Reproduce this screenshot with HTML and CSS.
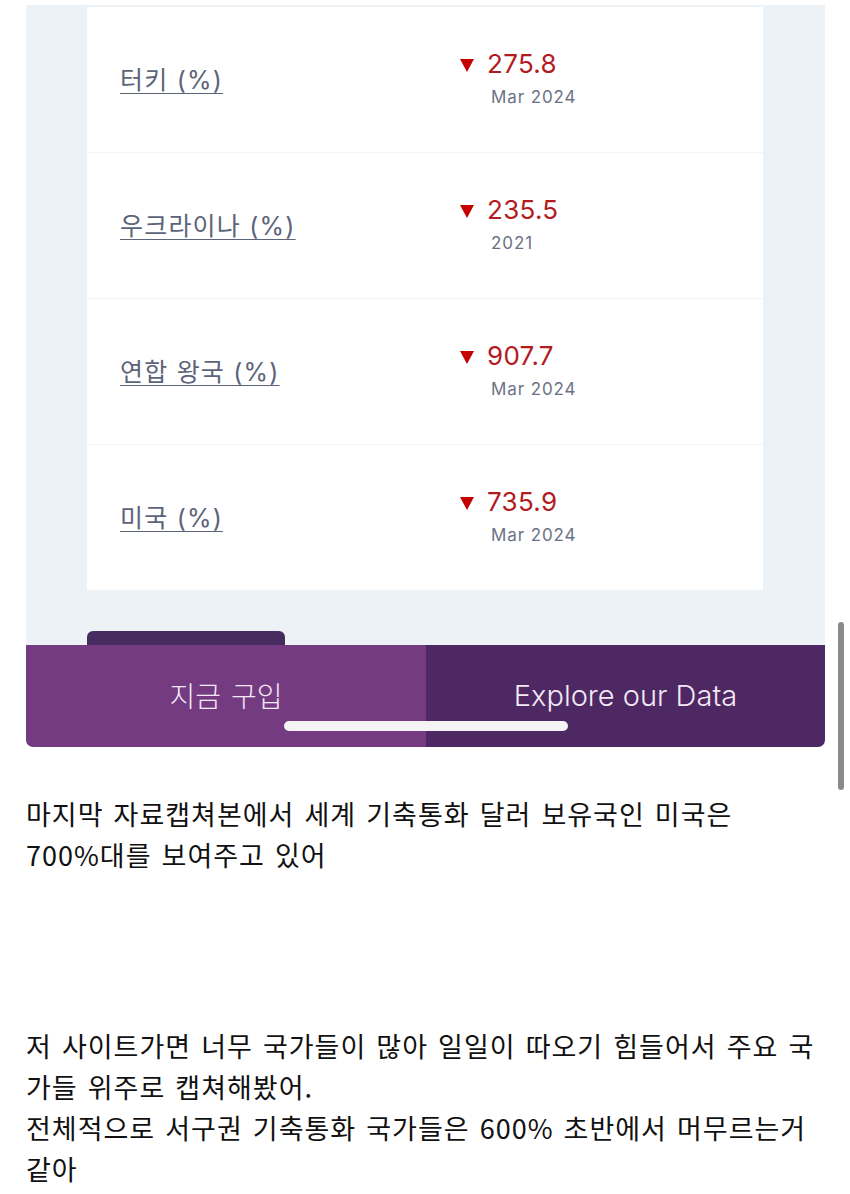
FILE: index.html
```html
<!DOCTYPE html>
<html lang="ko">
<head>
<meta charset="utf-8">
<title>기축통화 국가</title>
<link rel="stylesheet" href="styles.css">
</head>
<body>
<div class="page">
  <section class="panel">
    <div class="card">
      <div class="row">
        <a class="label" href="#">터키 (%)</a>
        <div class="value">
          <span class="tri"></span>
          <div class="stack">
            <span class="num">275.8</span>
            <span class="date">Mar 2024</span>
          </div>
        </div>
      </div>
      <div class="row">
        <a class="label" href="#">우크라이나 (%)</a>
        <div class="value">
          <span class="tri"></span>
          <div class="stack">
            <span class="num">235.5</span>
            <span class="date">2021</span>
          </div>
        </div>
      </div>
      <div class="row">
        <a class="label" href="#">연합 왕국 (%)</a>
        <div class="value">
          <span class="tri"></span>
          <div class="stack">
            <span class="num">907.7</span>
            <span class="date">Mar 2024</span>
          </div>
        </div>
      </div>
      <div class="row">
        <a class="label" href="#">미국 (%)</a>
        <div class="value">
          <span class="tri"></span>
          <div class="stack">
            <span class="num">735.9</span>
            <span class="date">Mar 2024</span>
          </div>
        </div>
      </div>
    </div>
    <div class="tab-row"><span class="tab"></span></div>
  </section>
  <div class="cta">
    <a class="cta-btn buy" href="#">지금 구입</a>
    <a class="cta-btn explore" href="#">Explore our Data</a>
    <span class="home-indicator"></span>
  </div>

  <div class="post">
    <p class="para">마지막 자료캡쳐본에서 세계 기축통화 달러 보유국인 미국은<br>700%대를 보여주고 있어</p>
    <p class="para second">저 사이트가면 너무 국가들이 많아 일일이 따오기 힘들어서 주요 국<br>가들 위주로 캡쳐해봤어.<br>전체적으로 서구권 기축통화 국가들은 600% 초반에서 머무르는거<br>같아</p>
  </div>
</div>
<span class="scrollbar"></span>
</body>
</html>
```

FILE: styles.css
```css
html, body {
  margin: 0;
  padding: 0;
  background: #ffffff;
}

body {
  position: relative;
  width: 850px;
  height: 1194px;
  overflow: hidden;
  font-family: "Inter", "Noto Sans CJK KR", sans-serif;
}

.page {
  padding-top: 5px;
}

.panel {
  margin: 0 25px 0 26px;
  background: #edf2f7;
  padding: 2px 62px 0 61px;
}

.card {
  background: #ffffff;
}

.row {
  height: 145px;
  display: grid;
  grid-template-columns: 340px 1fr;
  align-items: center;
  padding-left: 33px;
  border-bottom: 1px solid #f1f3f6;
}

.row:last-child {
  border-bottom: none;
}

.label {
  font-family: "Inter", "Noto Sans CJK KR", sans-serif;
  font-size: 25px;
  letter-spacing: 1.2px;
  color: #5c6479;
  text-decoration: underline;
  text-decoration-thickness: 1px;
  text-underline-offset: 4px;
  margin-top: -4px;
}

.value {
  display: flex;
  align-items: flex-start;
  margin-top: -3px;
}

.tri {
  width: 0;
  height: 0;
  border-left: 7px solid transparent;
  border-right: 7px solid transparent;
  border-top: 13px solid #c40000;
  margin-top: 10px;
  margin-right: 13px;
}

.stack {
  display: flex;
  flex-direction: column;
}

.num {
  font-size: 26px;
  line-height: 30px;
  letter-spacing: 0.3px;
  color: #b31a1e;
}

.date {
  font-size: 17px;
  line-height: 22px;
  letter-spacing: 0.9px;
  color: #6b7386;
  margin-top: 7px;
  padding-left: 4px;
}

.tab-row {
  height: 55px;
  display: flex;
  align-items: flex-end;
}

.tab {
  width: 198px;
  height: 14px;
  background: #472d5f;
  border-radius: 6px 6px 0 0;
}

.cta {
  position: relative;
  margin: 0 25px 0 26px;
  height: 102px;
  display: grid;
  grid-template-columns: 400px 1fr;
  border-radius: 0 0 7px 7px;
  overflow: hidden;
}

.cta-btn {
  display: flex;
  align-items: center;
  justify-content: center;
  text-decoration: none;
  color: #f3e8f6;
  font-weight: 300;
  padding-bottom: 2px;
}

.buy {
  background: #743b81;
  font-family: "Noto Sans CJK KR", sans-serif;
  font-size: 28px;
  word-spacing: 2px;
}

.explore {
  background: #4e2862;
  font-family: "Inter", sans-serif;
  font-size: 29px;
}

.home-indicator {
  position: absolute;
  left: 258px;
  top: 76px;
  width: 284px;
  height: 10px;
  border-radius: 5px;
  background: #f4f4f6;
}

.post {
  padding: 46px 26px 40px 26px;
}

.para {
  margin: 0;
  font-family: "Noto Sans CJK KR", sans-serif;
  font-size: 27px;
  line-height: 41px;
  letter-spacing: 1px;
  word-spacing: 1.5px;
  color: #111111;
  white-space: nowrap;
}

.para.second {
  margin-top: 150px;
}

.scrollbar {
  position: absolute;
  left: 838px;
  top: 622px;
  width: 6px;
  height: 168px;
  border-radius: 3px;
  background: #8a8a8a;
}
```
